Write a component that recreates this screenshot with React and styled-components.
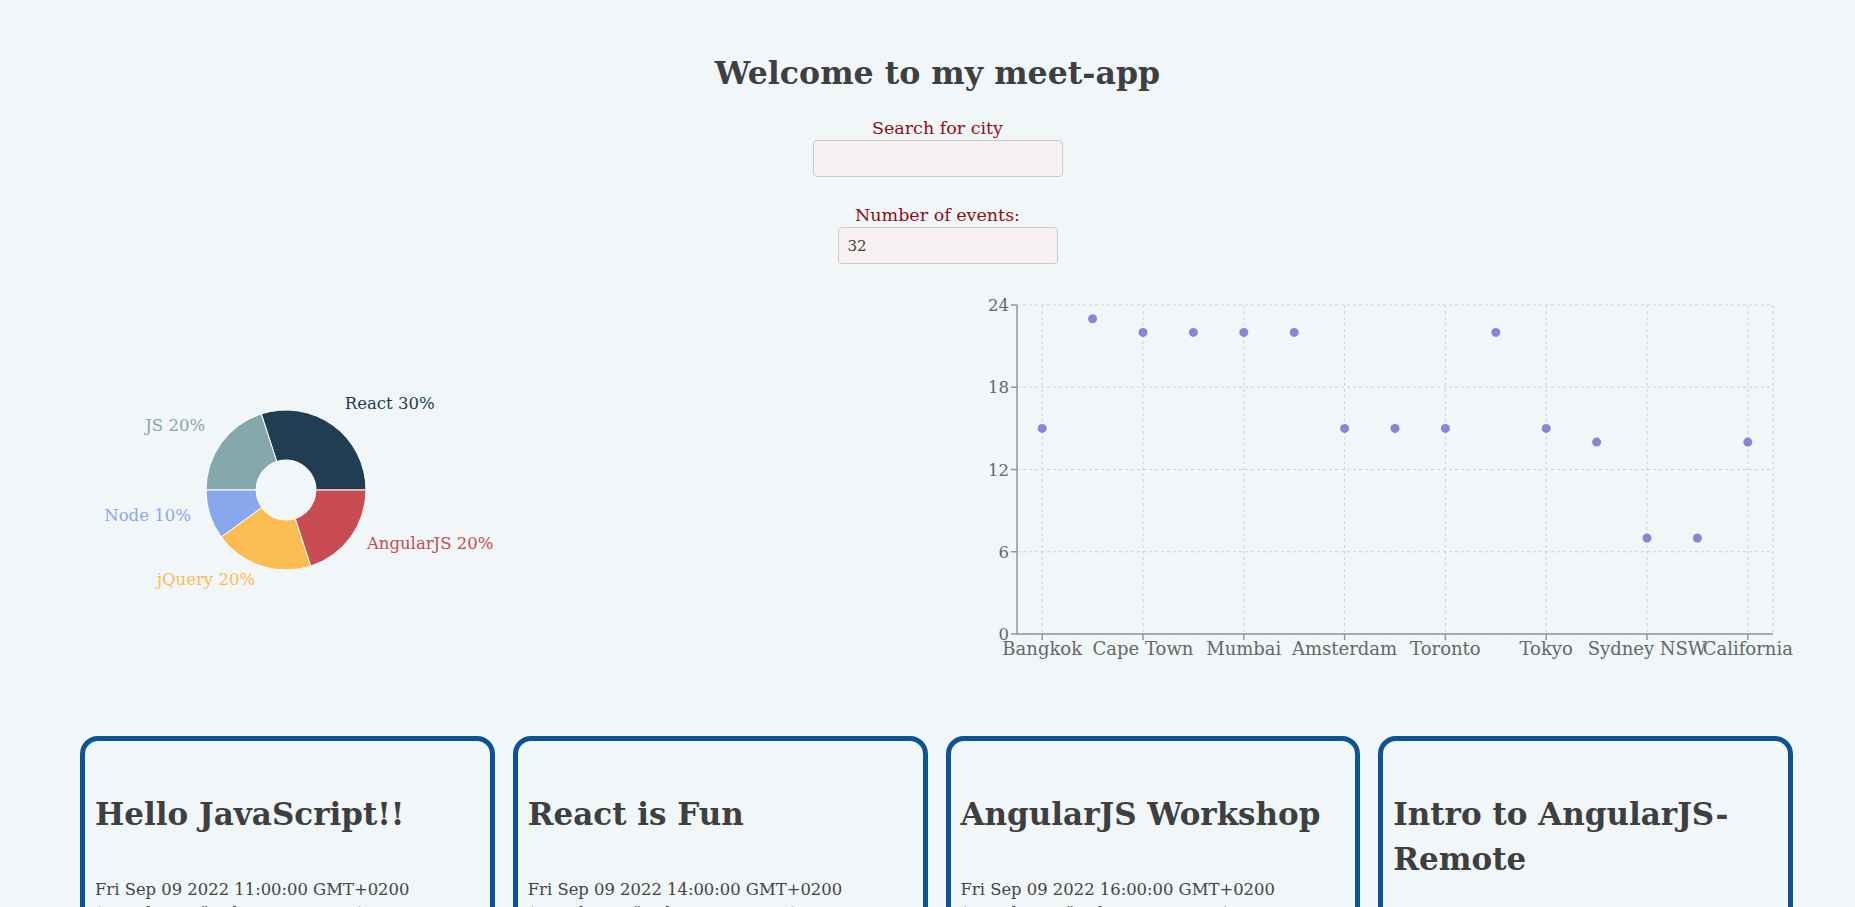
import React from "react";
import styled, { createGlobalStyle } from "styled-components";

const serif = `"DejaVu Serif", "Liberation Serif", serif`;

const GlobalStyle = createGlobalStyle`
  html, body {
    margin: 0;
    padding: 0;
    background: #f1f6f9;
  }
  body {
    font-family: ${serif};
    color: #424242;
    overflow: hidden;
  }
`;

const Page = styled.div`
  width: 1855px;
  height: 907px;
  overflow: hidden;
`;

const Header = styled.header`
  display: flex;
  flex-direction: column;
  align-items: center;
  padding: 52px 0 0 20px;
`;

const Title = styled.h1`
  margin: 0;
  font-size: 31.6px;
  line-height: 41px;
  font-weight: bold;
  color: #3f3f3f;
`;

const Field = styled.div`
  display: flex;
  flex-direction: column;
  align-items: center;
  margin-top: ${(p) => p.gap}px;
`;

const FieldLabel = styled.label`
  font-size: 17.5px;
  line-height: 20px;
  color: #8e0f14;
  margin-bottom: 2px;
`;

const TextInput = styled.input`
  box-sizing: border-box;
  width: ${(p) => p.w}px;
  height: 37px;
  margin-left: ${(p) => p.shift || 0}px;
  padding: 0 9px;
  border: 1px solid #cdc8c8;
  border-radius: 4px;
  background: #f8f1f1;
  font-family: ${serif};
  font-size: 15px;
  color: #444;
  outline: none;
`;

const ChartsRow = styled.section`
  display: flex;
  justify-content: space-between;
  align-items: flex-start;
  padding: 0 55px 0 60px;
  margin-top: 21px;
`;

const ChartSvg = styled.svg`
  display: block;
  overflow: visible;
`;

const PieLabel = styled.text`
  font-family: ${serif};
  font-size: 16.5px;
`;

const TickText = styled.text`
  font-family: ${serif};
  font-size: ${(p) => p.size}px;
  fill: #666;
`;

const CardGrid = styled.section`
  display: grid;
  grid-template-columns: repeat(4, 1fr);
  gap: 18px;
  padding: 0 62px 0 80px;
  margin-top: 71px;
`;

const Card = styled.article`
  border: 5px solid #0c5394;
  border-radius: 18px;
  padding: 0 10px 30px;
`;

const CardTitle = styled.h2`
  margin: 51px 0 0;
  font-size: 31px;
  line-height: 45px;
  font-weight: bold;
  color: #3f3f3f;
`;

const CardText = styled.p`
  margin: 41px 0 0;
  font-size: 16.4px;
  line-height: 24px;
  color: #444;
`;

const DetailsButton = styled.button`
  margin-top: 20px;
  padding: 8px 14px;
  border: 1px solid #0c5394;
  border-radius: 6px;
  background: #fff;
  font-family: ${serif};
  color: #0c5394;
`;

const genres = [
  { name: "React", value: 30, color: "#203d51" },
  { name: "JS", value: 20, color: "#84a8ab" },
  { name: "Node", value: 10, color: "#89a7ec" },
  { name: "jQuery", value: 20, color: "#fbbc52" },
  { name: "AngularJS", value: 20, color: "#c84c52" },
];

const cities = [
  { city: "Bangkok", count: 15 },
  { city: "Berlin", count: 23 },
  { city: "Cape Town", count: 22 },
  { city: "Dubai", count: 22 },
  { city: "Mumbai", count: 22 },
  { city: "London", count: 22 },
  { city: "Amsterdam", count: 15 },
  { city: "Paris", count: 15 },
  { city: "Toronto", count: 15 },
  { city: "New York", count: 22 },
  { city: "Tokyo", count: 15 },
  { city: "Santiago", count: 14 },
  { city: "Sydney NSW", count: 7 },
  { city: "Munich", count: 7 },
  { city: "California", count: 14 },
];

const events = [
  { summary: "Hello JavaScript!!", time: "11:00:00", location: "London, UK" },
  { summary: "React is Fun", time: "14:00:00", location: "Berlin, Germany" },
  { summary: "AngularJS Workshop", time: "16:00:00", location: "Cape Town, South Africa" },
  { summary: "Intro to AngularJS-Remote", time: "18:00:00", location: "Santiago, Chile" },
];

function polar(cx, cy, r, deg) {
  const a = (deg * Math.PI) / 180;
  return [cx + r * Math.cos(a), cy - r * Math.sin(a)];
}

function sectorPath(cx, cy, r0, r1, a0, a1) {
  const large = a1 - a0 > 180 ? 1 : 0;
  const [x1, y1] = polar(cx, cy, r1, a0);
  const [x2, y2] = polar(cx, cy, r1, a1);
  const [x3, y3] = polar(cx, cy, r0, a1);
  const [x4, y4] = polar(cx, cy, r0, a0);
  return `M${x1},${y1} A${r1},${r1} 0 ${large} 0 ${x2},${y2} L${x3},${y3} A${r0},${r0} 0 ${large} 1 ${x4},${y4} Z`;
}

function GenrePie() {
  const cx = 226;
  const cy = 205;
  const total = genres.reduce((s, g) => s + g.value, 0);
  let start = 0;
  return (
    <ChartSvg width="440" height="380">
      {genres.map((g) => {
        const sweep = (g.value / total) * 360;
        const a0 = start;
        const a1 = start + sweep;
        start = a1;
        const mid = (a0 + a1) / 2;
        const [lx, ly] = polar(cx, cy, 100, mid);
        return (
          <g key={g.name}>
            <path d={sectorPath(cx, cy, 30, 80, a0, a1)} fill={g.color} stroke="#fff" strokeWidth="1" />
            <PieLabel x={lx} y={ly} fill={g.color} textAnchor={lx > cx ? "start" : "end"}>
              {g.name} {g.value}%
            </PieLabel>
          </g>
        );
      })}
    </ChartSvg>
  );
}

function CityScatter() {
  const left = 67;
  const right = 823;
  const top = 20;
  const bottom = 349;
  const band = (right - left) / cities.length;
  const xAt = (i) => left + band * (i + 0.5);
  const yAt = (v) => bottom - (v * (bottom - top)) / 24;
  const yTicks = [0, 6, 12, 18, 24];
  const shown = cities.map((c, i) => i).filter((i) => i % 2 === 0);
  return (
    <ChartSvg width="850" height="380">
      <g stroke="#cfcfcf" strokeDasharray="3 3">
        {yTicks.map((t) => (
          <line key={t} x1={left} x2={right} y1={yAt(t)} y2={yAt(t)} />
        ))}
        {shown.map((i) => (
          <line key={i} x1={xAt(i)} x2={xAt(i)} y1={top} y2={bottom} />
        ))}
        <line x1={right} x2={right} y1={top} y2={bottom} />
      </g>
      <g stroke="#949494" strokeWidth="1.5">
        <line x1={left} x2={left} y1={top} y2={bottom} />
        <line x1={left} x2={right} y1={bottom} y2={bottom} />
        {yTicks.map((t) => (
          <line key={t} x1={left - 6} x2={left} y1={yAt(t)} y2={yAt(t)} />
        ))}
        {shown.map((i) => (
          <line key={i} x1={xAt(i)} x2={xAt(i)} y1={bottom} y2={bottom + 6} />
        ))}
      </g>
      {yTicks.map((t) => (
        <TickText key={t} size={16.5} x={left - 8} y={yAt(t) + 6} textAnchor="end">
          {t}
        </TickText>
      ))}
      {shown.map((i) => (
        <TickText key={i} size={18} x={xAt(i)} y={370} textAnchor="middle">
          {cities[i].city}
        </TickText>
      ))}
      {cities.map((c, i) => (
        <circle key={c.city} cx={xAt(i)} cy={yAt(c.count)} r="4.5" fill="#8884d8" />
      ))}
    </ChartSvg>
  );
}

function EventCard({ event }) {
  return (
    <Card>
      <CardTitle>{event.summary}</CardTitle>
      <CardText>
        Fri Sep 09 2022 {event.time} GMT+0200 (Mitteleuropäische Sommerzeit)
      </CardText>
      <CardText>@{event.summary} | {event.location}</CardText>
      <DetailsButton>show details</DetailsButton>
    </Card>
  );
}

export default function App() {
  return (
    <Page>
      <GlobalStyle />
      <Header>
        <Title>Welcome to my meet-app</Title>
        <Field gap={25}>
          <FieldLabel>Search for city</FieldLabel>
          <TextInput w={250} defaultValue="" />
        </Field>
        <Field gap={28}>
          <FieldLabel>Number of events:</FieldLabel>
          <TextInput w={220} shift={20} defaultValue="32" />
        </Field>
      </Header>
      <ChartsRow>
        <GenrePie />
        <CityScatter />
      </ChartsRow>
      <CardGrid>
        {events.map((e) => (
          <EventCard key={e.summary} event={e} />
        ))}
      </CardGrid>
    </Page>
  );
}
